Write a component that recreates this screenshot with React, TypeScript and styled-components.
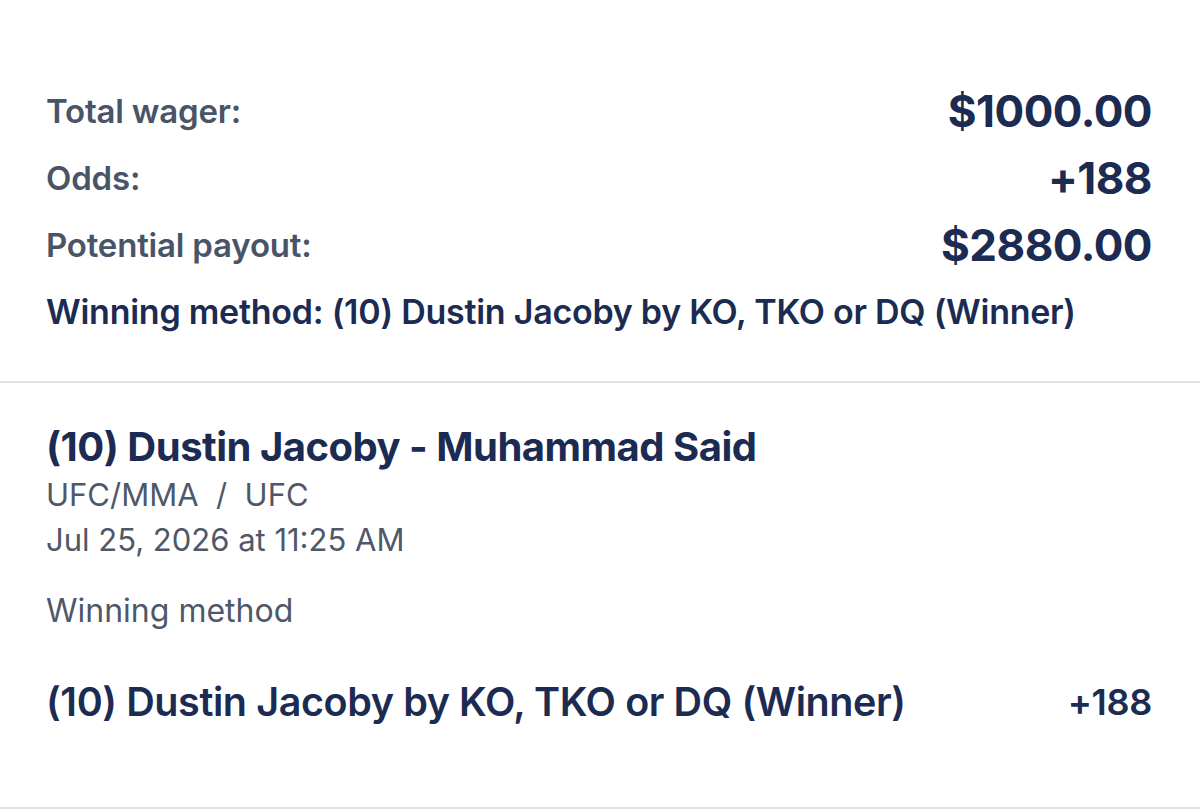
import styled, { createGlobalStyle } from 'styled-components'

const GlobalStyle = createGlobalStyle`
  html, body {
    margin: 0;
    padding: 0;
    background: #ffffff;
  }
  body {
    font-family: Inter, "Noto Sans", "Liberation Sans", sans-serif;
    -webkit-font-smoothing: antialiased;
  }
`

const colors = {
  navy: '#1b2b52',
  slate: '#4a5467',
  muted: '#4f5868',
  divider: '#e2e2e4',
}

const Page = styled.div`
  width: 1200px;
  height: 811px;
  overflow: hidden;
  background: #ffffff;
`

const Summary = styled.section`
  display: flex;
  flex-direction: column;
  padding: 77px 48px 36px 46px;
  border-bottom: 2px solid ${colors.divider};
`

const SummaryRow = styled.div`
  display: flex;
  justify-content: space-between;
  align-items: center;
  height: 67px;
`

const Label = styled.span`
  font-size: 33px;
  font-weight: 600;
  color: ${colors.slate};
  letter-spacing: -0.2px;
`

const Amount = styled.span`
  font-size: 44px;
  font-weight: 700;
  color: ${colors.navy};
  letter-spacing: -0.5px;
`

const MethodLine = styled.div`
  height: 67px;
  display: flex;
  align-items: center;
  font-size: 34px;
  font-weight: 600;
  color: ${colors.navy};
  letter-spacing: -0.25px;
`

const Event = styled.section`
  display: flex;
  flex-direction: column;
  padding: 39px 48px 0 46px;
  height: 426px;
  box-sizing: border-box;
  border-bottom: 2px solid ${colors.divider};
`

const EventTitle = styled.h2`
  margin: 0;
  font-size: 40px;
  line-height: 50px;
  font-weight: 700;
  color: ${colors.navy};
  letter-spacing: -0.5px;
`

const Meta = styled.div<{ $gap?: number; $size?: number }>`
  margin-top: ${({ $gap }) => $gap ?? 0}px;
  font-size: ${({ $size }) => $size ?? 31}px;
  line-height: 45px;
  font-weight: 400;
  color: ${colors.muted};
`

const Selection = styled.div`
  display: flex;
  justify-content: space-between;
  align-items: center;
  margin-top: 44px;
  height: 50px;
  color: ${colors.navy};
`

const SelectionName = styled.span`
  font-size: 39.5px;
  font-weight: 600;
  letter-spacing: -0.4px;
`

const SelectionOdds = styled.span`
  font-size: 36px;
  font-weight: 600;
  letter-spacing: -0.3px;
`

const summary = [
  { label: 'Total wager:', value: '$1000.00' },
  { label: 'Odds:', value: '+188' },
  { label: 'Potential payout:', value: '$2880.00' },
]

export default function App() {
  return (
    <Page>
      <GlobalStyle />
      <Summary>
        {summary.map((row) => (
          <SummaryRow key={row.label}>
            <Label>{row.label}</Label>
            <Amount>{row.value}</Amount>
          </SummaryRow>
        ))}
        <MethodLine>Winning method: (10) Dustin Jacoby by KO, TKO or DQ (Winner)</MethodLine>
      </Summary>
      <Event>
        <EventTitle>(10) Dustin Jacoby - Muhammad Said</EventTitle>
        <Meta>UFC/MMA&nbsp; /&nbsp; UFC</Meta>
        <Meta>Jul 25, 2026 at 11:25 AM</Meta>
        <Meta $gap={26} $size={32}>Winning method</Meta>
        <Selection>
          <SelectionName>(10) Dustin Jacoby by KO, TKO or DQ (Winner)</SelectionName>
          <SelectionOdds>+188</SelectionOdds>
        </Selection>
      </Event>
    </Page>
  )
}
